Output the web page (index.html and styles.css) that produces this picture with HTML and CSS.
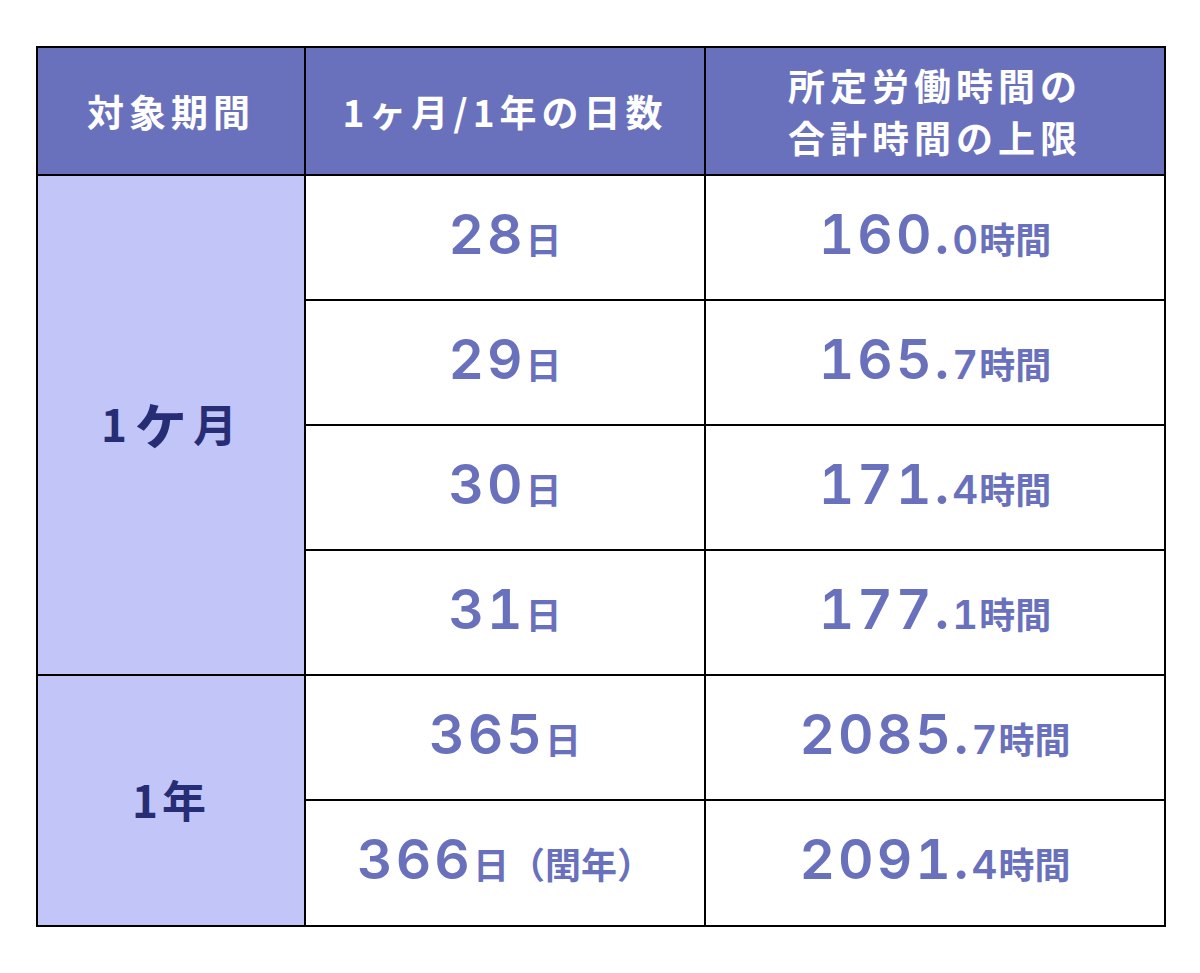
FILE: index.html
```html
<!DOCTYPE html>
<html lang="ja">
<head>
<meta charset="utf-8">
<link rel="stylesheet" href="styles.css">
</head>
<body>
<table class="tbl">
  <colgroup>
    <col class="c1"><col class="c2"><col class="c3">
  </colgroup>
  <thead>
    <tr class="head">
      <th>対象期間</th>
      <th>1ヶ月/1年の日数</th>
      <th>所定労働時間の<br>合計時間の上限</th>
    </tr>
  </thead>
  <tbody>
    <tr class="r">
      <td class="period" rowspan="4">1<span class="ke">ヶ</span>月</td>
      <td><span class="num">28</span><span class="unit">日</span></td>
      <td><span class="num">160.</span><span class="dec">0</span><span class="unit">時間</span></td>
    </tr>
    <tr class="r">
      <td><span class="num">29</span><span class="unit">日</span></td>
      <td><span class="num">165.</span><span class="dec">7</span><span class="unit">時間</span></td>
    </tr>
    <tr class="r">
      <td><span class="num">30</span><span class="unit">日</span></td>
      <td><span class="num">171.</span><span class="dec">4</span><span class="unit">時間</span></td>
    </tr>
    <tr class="r">
      <td><span class="num">31</span><span class="unit">日</span></td>
      <td><span class="num">177.</span><span class="dec">1</span><span class="unit">時間</span></td>
    </tr>
    <tr class="r">
      <td class="period" rowspan="2">1年</td>
      <td><span class="num">365</span><span class="unit">日</span></td>
      <td><span class="num">2085.</span><span class="dec">7</span><span class="unit">時間</span></td>
    </tr>
    <tr class="r last">
      <td><span class="num">366</span><span class="unit">日（閏年）</span></td>
      <td><span class="num">2091.</span><span class="dec">4</span><span class="unit">時間</span></td>
    </tr>
  </tbody>
</table>
</body>
</html>
```

FILE: styles.css
```css
html, body {
  margin: 0;
  padding: 0;
  background: #ffffff;
}
body {
  padding: 46px 0 0 36px;
  font-family: "Noto Sans CJK JP", sans-serif;
}
.tbl {
  border-collapse: collapse;
  table-layout: fixed;
  width: 1128px;
}
.c1 { width: 268px; }
.c2 { width: 400px; }
.c3 { width: 460px; }
.tbl th, .tbl td {
  border: 2px solid #000;
  text-align: center;
  vertical-align: middle;
  padding: 0;
}
.head th {
  height: 126px;
  background: #6a71bc;
  color: #ffffff;
  font-family: "Noto Sans CJK JP", sans-serif;
  font-weight: 700;
  font-size: 37px;
  line-height: 52px;
  letter-spacing: 5px;
}
.r td {
  height: 115px;
  padding-bottom: 8px;
  color: #6a71bc;
  white-space: nowrap;
}
.r.last td { height: 116px; }
.tbl td.period {
  background: #c1c5f7;
  color: #272d74;
  font-family: "Noto Sans CJK JP", sans-serif;
  font-weight: 700;
  font-size: 44px;
  line-height: 60px;
  letter-spacing: 4px;
  padding-bottom: 4px;
}
.ke {
  font-size: 60px;
  line-height: 40px;
  letter-spacing: 0;
  margin-right: 2px;
}
.num {
  font-family: "Inter", sans-serif;
  font-weight: 600;
  font-size: 55px;
  letter-spacing: 3px;
  font-variant-numeric: tabular-nums;
}
.dec {
  font-family: "Inter", sans-serif;
  font-weight: 600;
  font-size: 40px;
  letter-spacing: 1px;
  font-variant-numeric: tabular-nums;
}
.unit {
  font-family: "Noto Sans CJK JP", sans-serif;
  font-weight: 700;
  font-size: 36px;
}
```
